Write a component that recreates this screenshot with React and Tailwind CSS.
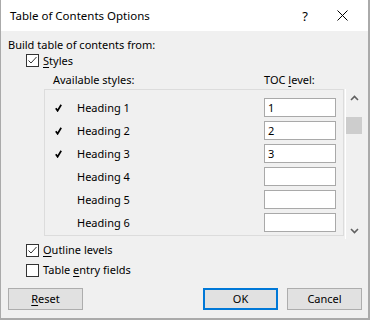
import React from "react";

const font = { fontFamily: '"Segoe UI", "Noto Sans", sans-serif' };

function Box({ checked }) {
  return (
    <div className="w-[13px] h-[13px] border border-[#333333] bg-white flex items-center justify-center shrink-0">
      {checked && (
        <svg width="11" height="11" viewBox="0 0 11 11">
          <path d="M1.5 5.5 L4 8 L9.5 2" fill="none" stroke="#333333" strokeWidth="1" />
        </svg>
      )}
    </div>
  );
}

function Tick() {
  return (
    <svg width="7" height="8" viewBox="0 0 7 8">
      <path d="M0.8 4.2 L2.6 6.8 L6.2 0.8" fill="none" stroke="#000" strokeWidth="1.7" />
    </svg>
  );
}

const rows = [
  { name: "Heading 1", checked: true, level: "1" },
  { name: "Heading 2", checked: true, level: "2" },
  { name: "Heading 3", checked: true, level: "3" },
  { name: "Heading 4", checked: false, level: "" },
  { name: "Heading 5", checked: false, level: "" },
  { name: "Heading 6", checked: false, level: "" },
];

export default function App() {
  return (
    <div
      style={font}
      className="w-[370px] h-[320px] flex flex-col border-l border-r-2 border-b-2 border-[#aaaaaa] text-[11px] text-black bg-[#f0f0f0] overflow-hidden"
    >
      <div className="h-[31px] bg-white flex items-center shrink-0">
        <span className="ml-[9px] leading-[16px] text-[11.5px]">Table of Contents Options</span>
        <span className="ml-auto mr-[29px] leading-[16px] text-[13px]">?</span>
        <svg className="mr-[20px]" width="11" height="11" viewBox="0 0 11 11">
          <path d="M0.5 0.5 L10.5 10.5 M10.5 0.5 L0.5 10.5" stroke="#000" strokeWidth="1" />
        </svg>
      </div>
      <div className="flex-1 flex flex-col pl-[7px]">
        <div className="mt-[6px] h-[16px] leading-[16px]">Build table of contents from:</div>
        <div className="h-[15px] flex items-center pl-[18px]">
          <Box checked />
          <span className="ml-[4px] leading-[16px]">
            <u className="underline-offset-2">S</u>tyles
          </span>
        </div>
        <div className="mt-[4px] h-[16px] flex leading-[16px] pl-[45px]">
          <span className="w-[211px]">Available styles:</span>
          <span>
            TOC <u className="underline-offset-2">l</u>evel:
          </span>
        </div>
        <div className="mt-[1px] flex">
          <div className="ml-[36px] w-[300px] h-[147px] border border-[#dcdcdc] pt-[6px]">
            {rows.map((r) => (
              <div key={r.name} className="h-[23px] flex items-center">
                <div className="w-[32px] pl-[10px] flex items-center">{r.checked && <Tick />}</div>
                <span className="w-[187px] leading-[16px]">{r.name}</span>
                <div className="w-[72px] h-[19px] bg-white border border-[#a9a9a9] flex items-center pl-[3px] leading-[16px]">
                  {r.level}
                </div>
              </div>
            ))}
          </div>
          <div className="ml-[1px] w-[1px] h-[150px] bg-white" />
          <div className="w-[16px] h-[150px] flex flex-col items-center pt-[6px] pb-[5px]">
            <svg width="9" height="6" viewBox="0 0 9 6">
              <path d="M1 5 L4.5 1.5 L8 5" fill="none" stroke="#606060" strokeWidth="1.6" />
            </svg>
            <div className="mt-[16px] w-[16px] h-[17px] bg-[#cdcdcd]" />
            <div className="flex-1" />
            <svg width="9" height="6" viewBox="0 0 9 6">
              <path d="M1 1 L4.5 4.5 L8 1" fill="none" stroke="#606060" strokeWidth="1.6" />
            </svg>
          </div>
        </div>
        <div className="mt-[4px] h-[14px] flex items-center pl-[18px]">
          <Box checked />
          <span className="ml-[4px] leading-[16px]">
            <u className="underline-offset-2">O</u>utline levels
          </span>
        </div>
        <div className="mt-[6px] h-[14px] flex items-center pl-[18px]">
          <Box />
          <span className="ml-[4px] leading-[16px]">
            Table <u className="underline-offset-2">e</u>ntry fields
          </span>
        </div>
        <div className="mt-[11px] flex pr-[6px]">
          <button className="w-[75px] h-[22px] bg-[#e1e1e1] border border-[#adadad] flex items-center justify-center leading-[16px]">
            <span>
              <u className="underline-offset-2">R</u>eset
            </span>
          </button>
          <div className="flex-1" />
          <button className="w-[75px] h-[22px] bg-[#e1e1e1] border-2 border-[#0078d7] flex items-center justify-center leading-[16px]">
            OK
          </button>
          <button className="ml-[9px] w-[75px] h-[22px] bg-[#e1e1e1] border border-[#adadad] flex items-center justify-center leading-[16px]">
            Cancel
          </button>
        </div>
      </div>
    </div>
  );
}
